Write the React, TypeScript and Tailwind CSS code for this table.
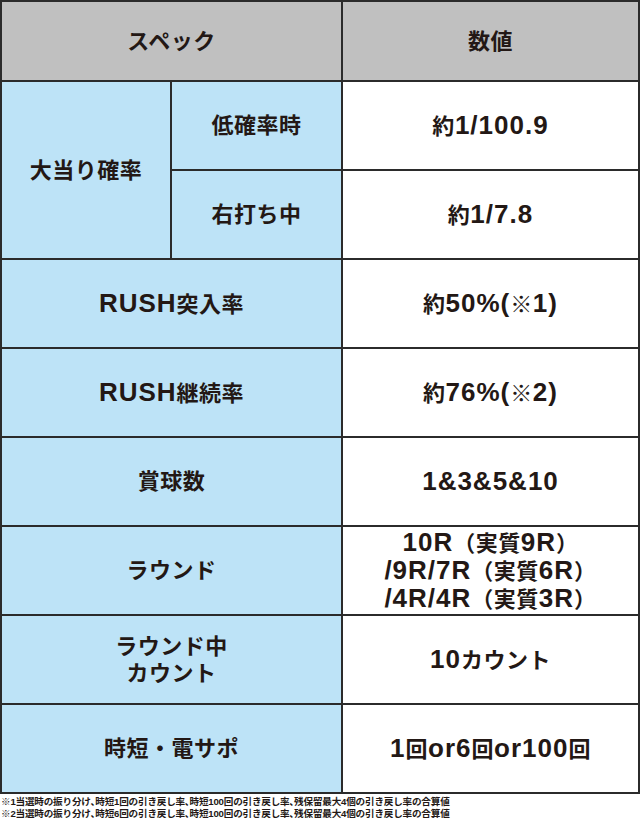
import { Fragment, type ReactNode } from "react";

const cell = "flex items-center justify-center text-center font-bold text-[22px] leading-[27px] tracking-[0.5px] text-[#231815]";
const blue = `${cell} bg-[#bde3f7]`;
const white = `${cell} bg-white`;

// Latin runs are set larger than the kana/kanji, as in the printed table
function T({ children }: { children: string }) {
  const parts = children.split(/([A-Za-z0-9/%.&()]+)/);
  return (
    <span>
      {parts.map((p, i) =>
        i % 2 === 1 ? (
          <span key={i} className="text-[26px] tracking-[1px]">
            {p}
          </span>
        ) : (
          <Fragment key={i}>{p}</Fragment>
        )
      )}
    </span>
  );
}

function Lines({ items }: { items: string[] }) {
  return (
    <div>
      {items.map((t, i) => (
        <div key={i} className="whitespace-nowrap">
          <T>{t}</T>
        </div>
      ))}
    </div>
  );
}

const rows: { label: ReactNode; value: ReactNode }[] = [
  { label: <T>RUSH突入率</T>, value: <T>約50%(※1)</T> },
  { label: <T>RUSH継続率</T>, value: <T>約76%(※2)</T> },
  { label: "賞球数", value: <T>1&3&5&10</T> },
  {
    label: "ラウンド",
    value: <Lines items={["10R（実質9R）", "/9R/7R（実質6R）", "/4R/4R（実質3R）"]} />,
  },
  { label: <Lines items={["ラウンド中", "カウント"]} />, value: <T>10カウント</T> },
  { label: "時短・電サポ", value: <T>1回or6回or100回</T> },
];

export default function App() {
  return (
    <div
      className="w-[640px] h-[818px] bg-white overflow-hidden"
      style={{ fontFamily: '"Liberation Sans", "Noto Sans CJK JP", sans-serif' }}
    >
      <div className="grid grid-cols-[168px_169px_295px] grid-rows-[78px_repeat(8,87px)] gap-[2px] p-[2px] bg-[#2b2b2b]">
        {/* header */}
        <div className={`${cell} col-span-2 bg-[#c0c0c0]`}>スペック</div>
        <div className={`${cell} bg-[#c0c0c0]`}>数値</div>

        {/* 大当り確率 */}
        <div className={`${blue} row-span-2`}>大当り確率</div>
        <div className={blue}>低確率時</div>
        <div className={white}>
          <T>約1/100.9</T>
        </div>
        <div className={blue}>右打ち中</div>
        <div className={white}>
          <T>約1/7.8</T>
        </div>

        {rows.map((r, i) => (
          <div key={i} className="contents">
            <div className={`${blue} col-span-2`}>{r.label}</div>
            <div className={white}>{r.value}</div>
          </div>
        ))}
      </div>

      {/* footnotes */}
      <div className="pt-[2px] pl-[1px] text-[9.6px] leading-[12px] font-bold tracking-[-0.2px] text-[#231815] whitespace-nowrap">
        <p>※1当選時の振り分け､時短1回の引き戻し率､時短100回の引き戻し率､残保留最大4個の引き戻し率の合算値</p>
        <p>※2当選時の振り分け､時短6回の引き戻し率､時短100回の引き戻し率､残保留最大4個の引き戻し率の合算値</p>
      </div>
    </div>
  );
}
